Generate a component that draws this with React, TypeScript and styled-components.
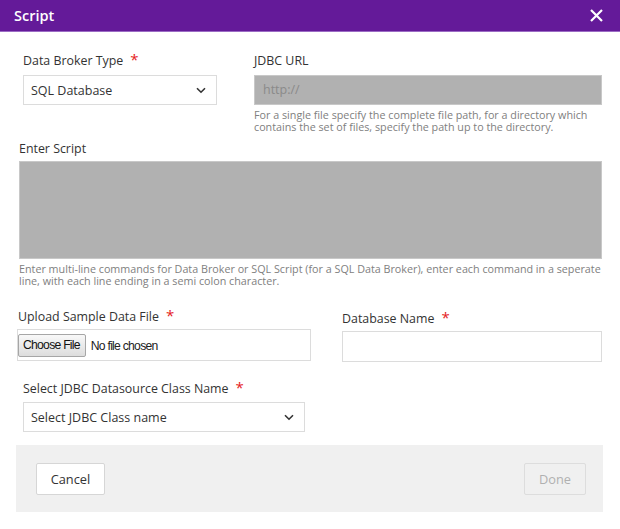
import styled, { createGlobalStyle } from "styled-components";

const GlobalStyle = createGlobalStyle`
  html, body {
    margin: 0;
    padding: 0;
    background: #ffffff;
  }
  body {
    font-family: "Open Sans", "Liberation Sans", sans-serif;
    color: #333333;
  }
  * {
    box-sizing: border-box;
  }
`;

const Dialog = styled.div`
  width: 620px;
  height: 529px;
  background: #ffffff;
  display: flex;
  flex-direction: column;
`;

const Header = styled.div`
  height: 32px;
  background: #641a99;
  border-bottom: 1px solid #9b6cc4;
  display: flex;
  align-items: center;
  justify-content: space-between;
  padding: 0 16px 0 14px;
`;

const HeaderTitle = styled.h1`
  margin: 0;
  font-size: 14.5px;
  font-weight: 600;
  color: #ffffff;
  line-height: 20px;
`;

const CloseButton = styled.button`
  border: none;
  background: transparent;
  padding: 0;
  width: 16px;
  height: 16px;
  display: flex;
  align-items: center;
  justify-content: center;
  cursor: pointer;
`;

const Row = styled.div<{ $top: number; $left: number }>`
  display: flex;
  margin-top: ${(p) => p.$top}px;
  padding-left: ${(p) => p.$left}px;
`;

const Field = styled.div<{ $width: number; $offset?: number }>`
  width: ${(p) => p.$width}px;
  display: flex;
  flex-direction: column;
  padding-top: ${(p) => p.$offset || 0}px;
`;

const Label = styled.label<{ $gap?: number }>`
  font-size: 12.4px;
  line-height: 16px;
  height: 18px;
  padding-top: 2px;
  color: #333333;
  margin-bottom: ${(p) => (p.$gap === undefined ? 6 : p.$gap)}px;
  display: block;
  white-space: nowrap;
`;

const Star = styled.span`
  color: #e51c23;
  font-size: 15px;
  line-height: 0;
  margin-left: 7px;
`;

const SelectBox = styled.div<{ $width: number }>`
  width: ${(p) => p.$width}px;
  height: 30px;
  border: 1px solid #dcdcdc;
  background: #ffffff;
  display: flex;
  align-items: center;
  justify-content: space-between;
  padding: 0 10px 0 7px;
  font-size: 12.5px;
  color: #333333;
`;

const GrayInput = styled.div<{ $height: number }>`
  height: ${(p) => p.$height}px;
  background: #b1b1b1;
  border: 1px solid #c8c8c8;
  font-size: 12.5px;
  color: #8a8a8a;
  padding: 5px 8px;
`;

const Help = styled.p`
  margin: 4px 0 0;
  font-size: 10.75px;
  line-height: 12px;
  color: #808080;
  white-space: nowrap;
`;

const TextBox = styled.div<{ $height: number }>`
  height: ${(p) => p.$height}px;
  border: 1px solid #dcdcdc;
  background: #ffffff;
`;

const FileBox = styled.div`
  height: 32px;
  border: 1px solid #dcdcdc;
  display: flex;
  align-items: center;
  padding-left: 0;

  input {
    font-family: "Liberation Sans", Arial, sans-serif;
    font-size: 12.2px;
    letter-spacing: -0.75px;
    color: #222222;
  }

  input::file-selector-button {
    font-family: "Liberation Sans", Arial, sans-serif;
    font-size: 12.2px;
    letter-spacing: -0.75px;
    color: #111111;
    height: 23px;
    padding: 0 5px 0 4px;
    margin-right: 5px;
    background: linear-gradient(#f8f8f8, #dddddd);
    border: 1px solid #a6a6a6;
    border-radius: 2px;
  }
`;

const Footer = styled.div`
  margin: 13px 17px 0 16px;
  height: 67px;
  background: #f0f0f0;
  display: flex;
  justify-content: space-between;
  align-items: flex-start;
  padding: 18px 17px 0 20px;
`;

const Button = styled.button<{ $disabled?: boolean }>`
  height: 32px;
  width: ${(p) => (p.$disabled ? 62 : 69)}px;
  padding: 0;
  font-family: "Open Sans", "Liberation Sans", sans-serif;
  font-size: 12.8px;
  background: ${(p) => (p.$disabled ? "#f0f0f0" : "#ffffff")};
  border: 1px solid ${(p) => (p.$disabled ? "#dddddd" : "#d6d6d6")};
  color: ${(p) => (p.$disabled ? "#b0b0b0" : "#333333")};
  border-radius: 2px;
`;

function Chevron() {
  return (
    <svg width="10" height="7" viewBox="0 0 10 7">
      <path d="M1 1.2l4 4 4-4" fill="none" stroke="#333" strokeWidth="1.6" />
    </svg>
  );
}

function App() {
  return (
    <>
      <GlobalStyle />
      <Dialog>
        <Header>
          <HeaderTitle>Script</HeaderTitle>
          <CloseButton aria-label="close">
            <svg width="13" height="13" viewBox="0 0 13 13">
              <path d="M1 1l11 11M12 1L1 12" stroke="#fff" strokeWidth="2.2" />
            </svg>
          </CloseButton>
        </Header>

        <Row $top={19} $left={23}>
          <Field $width={194}>
            <Label>
              Data Broker Type<Star>*</Star>
            </Label>
            <SelectBox $width={194}>
              SQL Database
              <Chevron />
            </SelectBox>
          </Field>
          <Field $width={348} style={{ marginLeft: 37 }}>
            <Label>JDBC URL</Label>
            <GrayInput $height={30}>http://</GrayInput>
            <Help>
              For a single file specify the complete file path, for a directory which
              <br />
              contains the set of files, specify the path up to the directory.
            </Help>
          </Field>
        </Row>

        <Row $top={6} $left={19}>
          <Field $width={583}>
            <Label $gap={4}>Enter Script</Label>
            <GrayInput $height={98} />
            <Help>
              Enter multi-line commands for Data Broker or SQL Script (for a SQL Data Broker), enter each command in a seperate
              <br />
              line, with each line ending in a semi colon character.
            </Help>
          </Field>
        </Row>

        <Row $top={20} $left={17}>
          <Field $width={294}>
            <Label $gap={4} style={{ paddingLeft: 1 }}>
              Upload Sample Data File<Star>*</Star>
            </Label>
            <FileBox>
              <input type="file" />
            </FileBox>
          </Field>
          <Field $width={260} $offset={2} style={{ marginLeft: 31 }}>
            <Label $gap={4}>
              Database Name<Star>*</Star>
            </Label>
            <TextBox $height={31} />
          </Field>
        </Row>

        <Row $top={17} $left={23}>
          <Field $width={282}>
            <Label $gap={5}>
              Select JDBC Datasource Class Name<Star>*</Star>
            </Label>
            <SelectBox $width={282}>
              Select JDBC Class name
              <Chevron />
            </SelectBox>
          </Field>
        </Row>

        <Footer>
          <Button>Cancel</Button>
          <Button $disabled>Done</Button>
        </Footer>
      </Dialog>
    </>
  );
}

export default App;
